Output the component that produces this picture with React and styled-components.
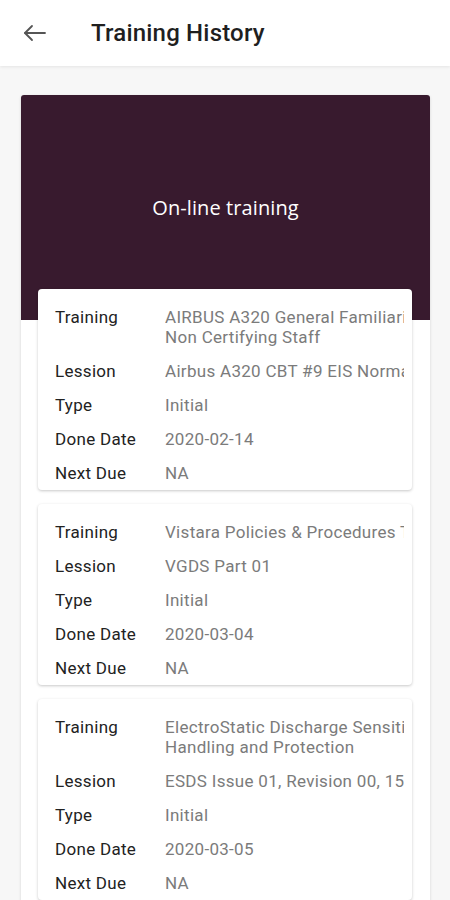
import React from 'react'
import styled, { createGlobalStyle } from 'styled-components'

const GlobalSC = createGlobalStyle`
  body {
    margin: 0;
    background: #f7f7f7;
    font-family: Roboto, "Liberation Sans", sans-serif;
  }
`

const PageSC = styled.div`
  height: 900px;
  overflow: hidden;
`

const HeaderSC = styled.header`
  height: 66px;
  background: #fff;
  display: flex;
  align-items: center;
  box-shadow: 0 1px 3px rgba(0,0,0,0.08);
  position: relative;
`

const BackSC = styled.button`
  border: none;
  background: none;
  padding: 0;
  margin-left: 23px;
  width: 24px;
  height: 24px;
  display: flex;
  align-items: center;
  justify-content: center;
`

const TitleSC = styled.h1`
  margin: 0 0 0 44px;
  font-size: 24px;
  font-weight: 500;
  color: #1f1f1f;
  letter-spacing: 0.2px;
`

const PanelSC = styled.section`
  margin: 29px 20px 0 21px;
  background: #fff;
  border-radius: 3px;
  box-shadow: 0 1px 3px rgba(0,0,0,0.15);
  padding-bottom: 20px;
`

const BannerSC = styled.div`
  height: 225px;
  background: #381a2e;
  border-radius: 3px 3px 0 0;
  display: flex;
  align-items: center;
  justify-content: center;
  color: #fff;
  font-family: "Open Sans", sans-serif;
  font-size: 20px;
  font-weight: 500;
  letter-spacing: 0.1px;
`

const ListSC = styled.div`
  margin: -31px 18px 0 17px;
  display: flex;
  flex-direction: column;
  gap: 14px;
  position: relative;
`

const CardSC = styled.div`
  background: #fff;
  border-radius: 4px;
  box-shadow: 0 1px 3px rgba(0,0,0,0.22);
  padding: 11px 8px 0 17px;
`

const RowSC = styled.div`
  display: flex;
  padding: 7px 0;
  font-size: 17px;
  line-height: 20px;
  letter-spacing: 0.3px;
`

const LabelSC = styled.div`
  width: 110px;
  flex-shrink: 0;
  color: #222;
`

const ValueSC = styled.div`
  flex: 1;
  min-width: 0;
  overflow: hidden;
  white-space: nowrap;
  color: #7b7b7b;
`

const records = [
  {
    training: ['AIRBUS A320 General Familiarization for', 'Non Certifying Staff'],
    lession: 'Airbus A320 CBT #9 EIS Normal Operation',
    type: 'Initial',
    done: '2020-02-14',
    next: 'NA',
  },
  {
    training: ['Vistara Policies & Procedures Training'],
    lession: 'VGDS Part 01',
    type: 'Initial',
    done: '2020-03-04',
    next: 'NA',
  },
  {
    training: ['ElectroStatic Discharge Sensitive Devices', 'Handling and Protection'],
    lession: 'ESDS Issue 01, Revision 00, 15',
    type: 'Initial',
    done: '2020-03-05',
    next: 'NA',
  },
]

const Row = ({ label, children }) => (
  <RowSC>
    <LabelSC>{label}</LabelSC>
    <ValueSC>{children}</ValueSC>
  </RowSC>
)

export default function App() {
  return (
    <PageSC>
      <GlobalSC />
      <HeaderSC>
        <BackSC aria-label='back'>
          <svg width='24' height='24' viewBox='0 0 24 24' fill='none' stroke='#555' strokeWidth='1.8' strokeLinecap='round' strokeLinejoin='round'>
            <path d='M22 12H2' />
            <path d='M9 5l-7 7 7 7' />
          </svg>
        </BackSC>
        <TitleSC>Training History</TitleSC>
      </HeaderSC>
      <PanelSC>
        <BannerSC>On-line training</BannerSC>
        <ListSC>
          {records.map((r, i) => (
            <CardSC key={i}>
              <Row label='Training'>
                {r.training.map((line, j) => <div key={j}>{line}</div>)}
              </Row>
              <Row label='Lession'>{r.lession}</Row>
              <Row label='Type'>{r.type}</Row>
              <Row label='Done Date'>{r.done}</Row>
              <Row label='Next Due'>{r.next}</Row>
            </CardSC>
          ))}
        </ListSC>
      </PanelSC>
    </PageSC>
  )
}
